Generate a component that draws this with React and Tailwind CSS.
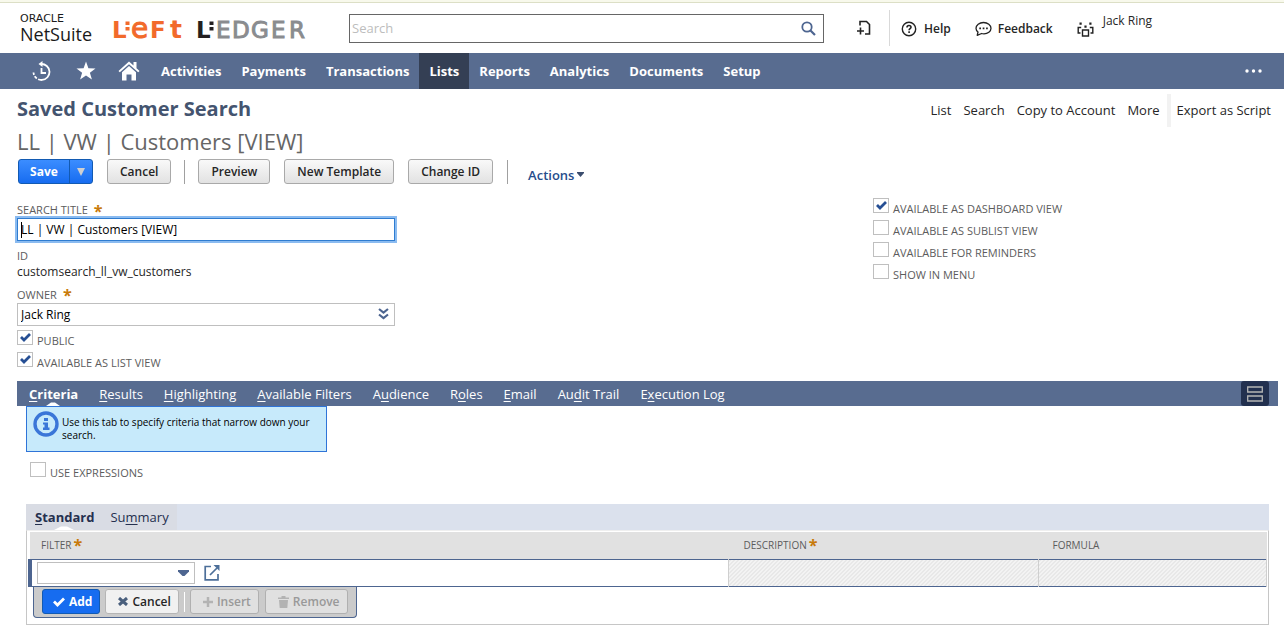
import { useState } from 'react';

const NAV_ITEMS = ['Activities', 'Payments', 'Transactions', 'Lists', 'Reports', 'Analytics', 'Documents', 'Setup'];

const PAGE_LINKS = ['List', 'Search', 'Copy to Account', 'More'];

// hot = index of the access key letter
const TABS = [
    { label: 'Criteria', hot: 0 },
    { label: 'Results', hot: 0 },
    { label: 'Highlighting', hot: 0 },
    { label: 'Available Filters', hot: 0 },
    { label: 'Audience', hot: 1 },
    { label: 'Roles', hot: 1 },
    { label: 'Email', hot: 0 },
    { label: 'Audit Trail', hot: 2 },
    { label: 'Execution Log', hot: 1 },
];

const SUB_TABS = [
    { label: 'Standard', hot: 0 },
    { label: 'Summary', hot: 2 },
];

function HotLabel({ label, hot }) {
    return (
        <>
            {label.slice(0, hot)}
            <span className="underline underline-offset-2">{label[hot]}</span>
            {label.slice(hot + 1)}
        </>
    );
}

function Required() {
    return <span className="text-[#c87a0a] text-base leading-3 font-bold">*</span>;
}

function NetSuiteLogo() {
    return (
        <a href="#home" className="flex flex-col gap-px shrink-0 w-[73px] text-[#1a1a1a]">
            <span className="font-['DejaVu_Sans'] font-normal text-[11px] leading-[11px]">ORACLE</span>
            <span className="text-lg leading-[18px] font-medium">NetSuite</span>
        </a>
    );
}

function LeftLedgerLogo() {
    return (
        <svg className="w-[196px] h-10 shrink-0" viewBox="0 -12 196 40" role="img" aria-label="Left Ledger" fontFamily="DejaVu Sans" fontSize="23" fontWeight="normal">
            <g fill="#f26a2b" stroke="#f26a2b" strokeWidth="1">
                <text x="-1" y="18" fontWeight="bold" stroke="none">L</text>
                <path d="M12.500 1.500h4v3.500h-4zM12.500 7h4v3.500h-4z" stroke="none" />
                <text x="18" y="18" fontSize="28">e</text>
                <text x="37" y="18" fontWeight="bold" stroke="none">F</text>
                <text x="57" y="18" fontSize="25" fontWeight="bold" stroke="none">t</text>
            </g>
            <g fill="#231f20">
                <text x="83" y="18" fontWeight="bold">L</text>
                <path d="M96.500 1.500h4v3.500h-4zM96.500 7h4v3.500h-4z" />
            </g>
            <g fill="#8a8c8f" stroke="#8a8c8f" strokeWidth="1">
                <text x="103" y="18">E</text>
                <text x="119" y="18">D</text>
                <text x="138" y="18">G</text>
                <text x="158" y="18">E</text>
                <text x="176" y="18">R</text>
            </g>
        </svg>
    );
}

function AddDocIcon() {
    return (
        <svg className="w-4 h-4" viewBox="0 0 16 16" fill="none" stroke="#222" strokeWidth="1.6">
            <path d="M4 5.500V1.500h6.500l3 3v9.500h-4.500" />
            <path d="M1 11h7M4.500 7.500v7" />
        </svg>
    );
}

function HelpIcon() {
    return (
        <svg className="w-4 h-4" viewBox="0 0 16 16" fill="none" stroke="#222" strokeWidth="1.4">
            <circle cx="8" cy="8" r="6.700" />
            <path d="M6 6.500c0-2.700 4-2.600 4-.3 0 1.400-1.900 1.500-1.900 3M8.100 10.300v1.600" strokeWidth="1.600" />
        </svg>
    );
}

function FeedbackIcon() {
    return (
        <svg className="w-[17px] h-4" viewBox="0 0 17 16" fill="none" stroke="#222" strokeWidth="1.300">
            <path d="M2.200 14.300l.8-3.300C1.600 10 1 8.700 1 7.300 1 4 4.300 1.500 8.500 1.500S16 4 16 7.300s-3.300 5.500-7 5.500c-1 0-1.700-.1-2.400-.3z" strokeLinejoin="round" />
            <path d="M4.300 6.500h1.700v1.700h-1.700zM7.700 6.500h1.700v1.700h-1.700zM11.100 6.500h1.700v1.700h-1.700z" fill="#222" stroke="none" />
        </svg>
    );
}

function RoleIcon() {
    return (
        <svg className="w-[17px] h-4" viewBox="0 0 17 16" fill="none" stroke="#222" strokeWidth="1.400">
            <path d="M5.500 9h6v6h-6z" />
            <path d="M3.500 12H1.200V6.500h3M13.500 12h2.300V6.500h-3" />
            <path d="M2.500 1.500h2.200v2.200H2.500zM12.300 1.500h2.200v2.200h-2.200zM7.400 4.500h2.200v2.200H7.400z" fill="#222" stroke="none" />
        </svg>
    );
}

function Header() {
    return (
        <header className="flex items-center h-[50px] pl-5 pr-8 text-xs font-semibold text-[#262626]">
            <NetSuiteLogo />
            <div className="ml-5 flex shrink-0">
                <LeftLedgerLogo />
            </div>
            <div className="relative ml-10 flex-[0_1_475px]">
                <input
                    type="search"
                    aria-label="Search"
                    placeholder="Search"
                    className="block w-full h-[29px] px-[2px] border border-[#666] rounded-none font-normal text-[13px] placeholder:text-[#bdbdbd] outline-none"
                />
                <svg className="absolute right-2 top-[7px] w-[15px] h-[15px]" viewBox="0 0 15 15" fill="none" stroke="#4d6590">
                    <circle cx="6" cy="6" r="4.700" strokeWidth="1.800" />
                    <path d="M9.500 9.500l4.500 4.500" strokeWidth="2.200" />
                </svg>
            </div>
            <button aria-label="Create new" className="ml-8 shrink-0">
                <AddDocIcon />
            </button>
            <div className="ml-[17px] pl-[11px] pt-[2px] h-9 flex items-center gap-6 border-l border-[#d9d9d9] shrink-0">
                <button className="flex items-center gap-[7px]">
                    <HelpIcon />
                    Help
                </button>
                <button className="flex items-center gap-[6px]">
                    <FeedbackIcon />
                    Feedback
                </button>
                <button className="flex items-center gap-[9px] font-normal">
                    <RoleIcon />
                    <span className="pb-4">Jack Ring</span>
                </button>
            </div>
        </header>
    );
}

function NavBar() {
    return (
        <nav className="flex items-center h-9 pl-8 pr-[22px] bg-[#586c90] text-white text-[13px] font-bold">
            <a href="#recent" aria-label="Recent records" className="mr-6">
                <svg className="w-5 h-5" viewBox="0 0 20 20" fill="none" stroke="white" strokeWidth="1.800">
                    <path d="M1.500 11.500A8 8 0 1 0 9 3" strokeDasharray="2.500 1.500 3 1.500 60" />
                    <path d="M10.500 0L6.500 3l4 3z" fill="white" stroke="none" />
                    <path d="M9.500 7v5H14" />
                </svg>
            </a>
            <a href="#shortcuts" aria-label="Shortcuts" className="mr-[22px]">
                <svg className="w-5 h-5" viewBox="0 0 20 20" fill="white">
                    <path d="M10 .5l2.400 6.700 7.100.2-5.600 4.300 2 6.900L10 14.500l-5.900 4.100 2-6.900L.5 7.400l7.100-.2z" />
                </svg>
            </a>
            <a href="#home" aria-label="Home">
                <svg className="w-[22px] h-5" viewBox="0 0 22 20" fill="white">
                    <path d="M11 .5L.500 10l1.300 1.300L11 3.200l9.200 8.100 1.300-1.300-3-2.700V1h-3v3.600z" />
                    <path d="M11 5l-7 6.200V19.500h4.500v-6h5v6H18v-8.300z" />
                </svg>
            </a>
            <div className="flex self-stretch ml-[11px]">
                {NAV_ITEMS.map((item) => (
                    <a
                        key={item}
                        href={`#${item}`}
                        className={`flex items-center px-[10px] pt-px ${item === 'Lists' ? 'bg-[#343f54]' : ''}`}
                    >
                        {item}
                    </a>
                ))}
            </div>
            <button aria-label="More menus" className="ml-auto">
                <svg className="w-[17px] h-1" viewBox="0 0 17 4" fill="white">
                    <circle cx="2" cy="2" r="1.700" />
                    <circle cx="8.500" cy="2" r="1.700" />
                    <circle cx="15" cy="2" r="1.700" />
                </svg>
            </button>
        </nav>
    );
}

function GreyButton({ children }) {
    return (
        <button className="h-[25px] px-3 border border-[#a9a9a9] rounded-[3px] bg-linear-to-b from-[#f9f9f9] to-[#e2e2e2] text-xs font-semibold text-[#262626]">
            {children}
        </button>
    );
}

function ButtonRow() {
    return (
        <div className="flex items-center pl-px">
            <div className="flex h-[25px] rounded-[3px] border border-[#125ab2] bg-linear-to-b from-[#3b8dff] to-[#166cf0] text-white">
                <button className="w-[50px] text-xs font-bold">Save</button>
                <button aria-label="More save options" className="w-[23px] border-l border-[#125ab2] flex items-center justify-center">
                    <svg className="w-2 h-2" viewBox="0 0 8 8" fill="#d0d0d0"><path d="M0 0h8L4 8z" /></svg>
                </button>
            </div>
            <div className="ml-[14px] flex"><GreyButton>Cancel</GreyButton></div>
            <span className="mx-[13px] w-px h-6 bg-[#a0a0a0]" />
            <div className="flex gap-[14px]">
                <GreyButton>Preview</GreyButton>
                <GreyButton>New Template</GreyButton>
                <GreyButton>Change ID</GreyButton>
            </div>
            <span className="mx-[14px] w-px h-6 bg-[#a0a0a0]" />
            <button className="ml-[6px] mt-[6px] flex items-center gap-[3px] text-[13px] leading-4 font-semibold text-[#264d8c]">
                Actions
                <svg className="w-[7px] h-[5px]" viewBox="0 0 7 5" fill="#3b4d6e"><path d="M0 0h7v1L3.500 5 0 1z" /></svg>
            </button>
        </div>
    );
}

function Checkbox({ label, checked = false }) {
    const [on, setOn] = useState(checked);
    return (
        <label className="flex items-start gap-1 h-[22px] text-[11px] leading-[22px] text-[#5c5c5c]">
            <span className="relative flex">
                <input
                    type="checkbox"
                    checked={on}
                    onChange={() => setOn(!on)}
                    className="appearance-none w-4 h-[15px] border border-[#bfbfbf] bg-white"
                />
                {on && (
                    <svg className="absolute left-[3px] top-[3px] w-[11px] h-[9px] pointer-events-none" viewBox="0 0 11 9" fill="none" stroke="#264f94" strokeWidth="2.800">
                        <path d="M1 4l3 3L10 1" />
                    </svg>
                )}
            </span>
            {label}
        </label>
    );
}

function MainFields() {
    return (
        <div className="flex mt-[19px] px-[17px]">
            <div className="flex-[0_0_378px]">
                <label htmlFor="title" className="flex items-center gap-[6px] h-[15px] text-[11px] text-[#5c5c5c]">
                    SEARCH TITLE <Required />
                </label>
                <div className="relative">
                    <input
                        id="title"
                        defaultValue="LL | VW | Customers [VIEW]"
                        className="block w-full h-[23px] px-[3px] border border-[#2f7cd0] ring-2 ring-[#8bbbf0] text-xs text-black outline-none"
                    />
                    {/* caret */}
                    <span className="absolute left-1 top-1 w-px h-4 bg-black" />
                </div>
                <div className="mt-2 text-[11px] leading-[14px] text-[#5c5c5c]">ID</div>
                <div className="text-xs leading-[18px] text-[#262626]">customsearch_ll_vw_customers</div>
                <label htmlFor="owner" className="mt-[6px] flex items-center gap-[6px] h-4 text-[11px] text-[#5c5c5c]">
                    OWNER <Required />
                </label>
                <div className="relative">
                    <select id="owner" className="appearance-none block w-full h-[23px] px-[3px] border border-[#bfbfbf] bg-white text-xs text-black outline-none">
                        <option>Jack Ring</option>
                    </select>
                    <svg className="absolute right-[6px] top-[5px] w-[11px] h-3 pointer-events-none" viewBox="0 0 11 12" fill="none" stroke="#4d6590" strokeWidth="2.200">
                        <path d="M1 1l4.500 3.500L10 1M1 6.500L5.500 10 10 6.500" />
                    </svg>
                </div>
                <div className="mt-1">
                    <Checkbox label="PUBLIC" checked />
                    <Checkbox label="AVAILABLE AS LIST VIEW" checked />
                </div>
            </div>
            <div className="ml-auto w-[394px] -mt-[5px]">
                <Checkbox label="AVAILABLE AS DASHBOARD VIEW" checked />
                <Checkbox label="AVAILABLE AS SUBLIST VIEW" />
                <Checkbox label="AVAILABLE FOR REMINDERS" />
                <Checkbox label="SHOW IN MENU" />
            </div>
        </div>
    );
}

function TabBar({ active, onChange }) {
    return (
        <div className="flex ml-[17px] mr-[6px] mt-[7px] h-[25px] pl-3 bg-[#586c90] text-white text-[13px]">
            <div className="flex gap-[21px]">
                {TABS.map((tab) => (
                    <button
                        key={tab.label}
                        onClick={() => onChange(tab.label)}
                        className={`relative pt-[2px] ${active === tab.label ? 'font-bold' : ''}`}
                    >
                        <HotLabel {...tab} />
                        {active === tab.label && (
                            <svg className="absolute left-[17px] bottom-0 w-[14px] h-1" viewBox="0 0 14 4" fill="white"><path d="M0 4l5-3.500h4L14 4z" /></svg>
                        )}
                    </button>
                ))}
            </div>
            <button aria-label="Toggle layout" className="ml-auto mr-[9px] w-7 rounded-[3px] bg-[#22304f] flex items-center justify-center">
                <svg className="w-4 h-4" viewBox="0 0 16 16" fill="none" stroke="#b5b5b5" strokeWidth="1.300">
                    <path d="M.7 1h14.600v5H.7zM.7 10h14.600v5H.7z" />
                </svg>
            </button>
        </div>
    );
}

function InfoBox() {
    return (
        <div className="flex gap-[3px] w-[301px] h-[46px] pl-[6px] pt-1 pr-2 border border-[#2f74d8] bg-[#c7eafb] text-[10px] leading-[13px] text-black">
            <svg className="w-[26px] h-[26px] shrink-0" viewBox="0 0 26 26" fill="#3a76d8">
                <circle cx="13" cy="13" r="11" fill="none" stroke="#3a76d8" strokeWidth="3.400" />
                <path d="M11 7h4v3h-4zM10 11.500h5v5h1.500V19H10v-2.500h1.500v-3H10z" />
            </svg>
            <p className="pt-[5px]">Use this tab to specify criteria that narrow down your search.</p>
        </div>
    );
}

function RowButton({ icon, children, disabled }) {
    return (
        <button
            disabled={disabled}
            className={`flex items-center gap-1 h-[25px] pl-3 pr-[7px] rounded-[3px] border text-xs font-semibold ${disabled ? 'border-[#b0b0b0] bg-[#e0e0e0] text-[#999]' : 'border-[#b5b5b5] bg-[#f1f1f1] text-[#262626]'}`}
        >
            {icon}
            {children}
        </button>
    );
}

function CriteriaTable() {
    return (
        <div className="border border-[#c6c6c6] border-t-[#efefef] p-px pb-[6px]">
            <table className="w-full table-fixed border-collapse">
                <thead>
                    <tr className="h-[27px] bg-[#e1e1e1] text-[10px] text-left text-[#5c5c5c]">
                        <th className="pl-[11px] font-normal">
                            <span className="flex items-center gap-[2px]">FILTER <Required /></span>
                        </th>
                        <th className="w-[310px] pl-[15px] font-normal">
                            <span className="flex items-center gap-[2px]">DESCRIPTION <Required /></span>
                        </th>
                        <th className="w-[228px] pl-[14px] font-normal">FORMULA</th>
                    </tr>
                </thead>
                <tbody>
                    <tr className="h-[27px] border-y border-[#4d6590]">
                        <td className="border-l-4 border-l-[#4d6590] p-0 pl-[5px]">
                            <div className="flex items-center gap-[9px]">
                                <div className="relative">
                                    <select aria-label="Filter" className="appearance-none block w-[158px] h-[22px] border border-[#bfbfbf] bg-white outline-none">
                                        <option></option>
                                    </select>
                                    <svg className="absolute right-[6px] top-2 w-[11px] h-[6px] pointer-events-none" viewBox="0 0 11 6" fill="#4d6590"><path d="M0 0h11v1.500L6.500 6h-2L0 1.500z" /></svg>
                                </div>
                                <a href="#filter" aria-label="Open filter">
                                    <svg className="w-4 h-4" viewBox="0 0 16 16" fill="none" stroke="#4d6f99" strokeWidth="1.700">
                                        <path d="M7 1.500H1.200v13.300h12.800V9M6 10l7-7" />
                                        <path d="M9.500 0H15.500v6z" fill="#4d6f99" stroke="none" />
                                    </svg>
                                </a>
                            </div>
                        </td>
                        <td className="border-x border-x-[#cfcfcf] bg-[linear-gradient(135deg,#e2e2e2_25%,#f8f8f8_25%_50%,#e2e2e2_50%_75%,#f8f8f8_75%)] bg-size-[4px_4px]"></td>
                        <td className="border-r border-r-[#cfcfcf] bg-[linear-gradient(135deg,#e2e2e2_25%,#f8f8f8_25%_50%,#e2e2e2_50%_75%,#f8f8f8_75%)] bg-size-[4px_4px]"></td>
                    </tr>
                </tbody>
            </table>
            <div className="ml-[5px] w-fit flex items-center h-[31px] px-2 rounded-b-[4px] border border-t-0 border-[#4d6590] bg-[#cbcbcb]">
                <button className="flex items-center gap-1 h-[25px] pl-[10px] pr-[7px] rounded-[3px] border border-[#125ab2] bg-[#166cf0] text-white text-xs font-bold">
                    <svg className="w-3 h-[10px]" viewBox="0 0 12 10" fill="none" stroke="white" strokeWidth="2.800"><path d="M1 4.500l3.500 3.500L11 1.500" /></svg>
                    Add
                </button>
                <div className="ml-[5px] flex">
                    <RowButton icon={<svg className="w-[10px] h-[9px]" viewBox="0 0 10 9" stroke="#4a5f7d" strokeWidth="3"><path d="M1 1l8 7M9 1L1 8" /></svg>}>Cancel</RowButton>
                </div>
                <span className="mx-[5px] w-px h-5 bg-white" />
                <div className="flex gap-[6px]">
                    <RowButton disabled icon={<svg className="w-[10px] h-[10px]" viewBox="0 0 10 10" stroke="#b3b3b3" strokeWidth="2.500"><path d="M5 0v10M0 5h10" /></svg>}>Insert</RowButton>
                    <RowButton disabled icon={<svg className="w-[11px] h-3" viewBox="0 0 11 12" fill="#b3b3b3"><path d="M0 1.500h3.500V0h4v1.500H11V3H0zM1 4h9l-.7 8H1.700z" /></svg>}>Remove</RowButton>
                </div>
            </div>
        </div>
    );
}

export default function App() {
    const [tab, setTab] = useState('Criteria');
    const [subTab, setSubTab] = useState('Standard');

    return (
        <div className="min-h-screen bg-white font-['Open_Sans',sans-serif]">
            <div className="h-[3px] bg-[#f8f9ec] border-b border-[#dcdfc6]" />
            <Header />
            <NavBar />

            <main>
                <div className="flex justify-between pl-[17px] pr-[13px]">
                    <div>
                        <h1 className="pt-[5px] text-xl leading-[30px] font-bold text-[#44546f]">Saved Customer Search</h1>
                        <h2 className="text-[22px] leading-[35px] text-[#666]">LL | VW | Customers [VIEW]</h2>
                        <ButtonRow />
                    </div>
                    <div className="flex h-[33px] mt-[5px] text-[13px] text-[#262626]">
                        <div className="flex items-center gap-3 pr-[7px] border-r-4 border-[#f2f2f2]">
                            {PAGE_LINKS.map((link) => <a key={link} href={`#${link}`}>{link}</a>)}
                        </div>
                        <a href="#export" className="flex items-center pl-[6px]">Export as Script</a>
                    </div>
                </div>

                <MainFields />
                <TabBar active={tab} onChange={setTab} />

                <div className="pl-[26px] pr-[15px]">
                    <InfoBox />
                    <div className="mt-[10px] ml-1">
                        <Checkbox label="USE EXPRESSIONS" />
                    </div>
                    <div className="mt-5 flex h-[26px] bg-[#dbe1ed] text-[13px] text-[#25304f]">
                        <div className="flex bg-[#d9dce4]">
                            {SUB_TABS.map((item) => (
                                <button
                                    key={item.label}
                                    onClick={() => setSubTab(item.label)}
                                    className={`relative px-2 pt-[2px] first:pl-[9px] ${subTab === item.label ? 'font-bold' : ''}`}
                                >
                                    <HotLabel {...item} />
                                    {subTab === item.label && (
                                        <svg className="absolute left-7 bottom-0 w-5 h-1" viewBox="0 0 20 4" fill="white"><path d="M0 4l7-3.500h6L20 4z" /></svg>
                                    )}
                                </button>
                            ))}
                        </div>
                    </div>
                    <CriteriaTable />
                </div>
            </main>
        </div>
    );
}
